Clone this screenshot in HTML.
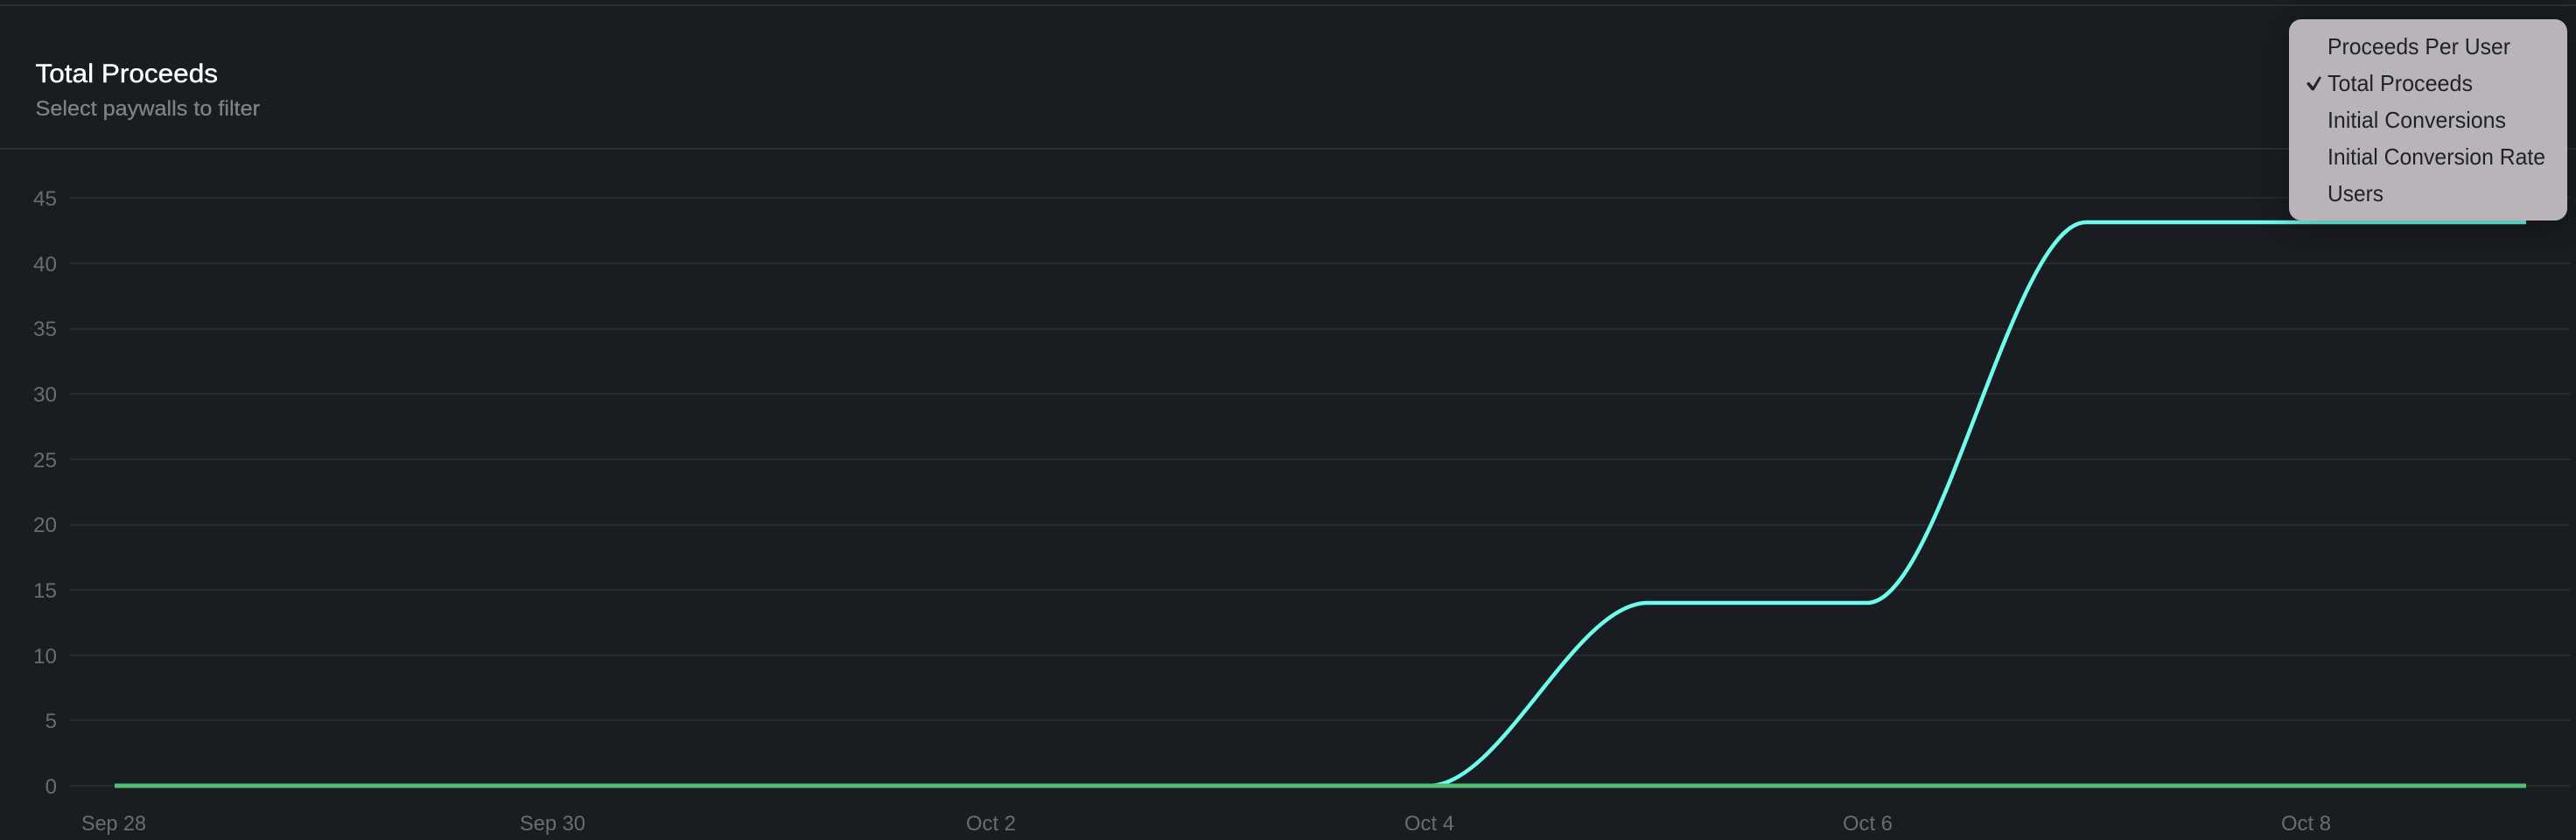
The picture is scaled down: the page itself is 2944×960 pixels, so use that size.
<!DOCTYPE html>
<html>
<head>
<meta charset="utf-8">
<style>
html,body{margin:0;padding:0;background:#191c20;width:2944px;height:960px;overflow:hidden}
svg{display:block;position:absolute;left:0;top:0}
text{font-family:"Liberation Sans",sans-serif}
.y{font-size:24px;fill:#696d6f;text-anchor:end}
.x{font-size:24px;fill:#696d6f}
.m{font-size:26px;fill:#1f2226}
#menu{position:absolute;left:2616px;top:22px;width:318px;height:230px;border-radius:14px;background:#b9b4b9;box-shadow:0 8px 32px rgba(0,0,0,.3)}
</style>
</head>
<body>
<svg width="2944" height="960" viewBox="0 0 2944 960" xmlns="http://www.w3.org/2000/svg">
<rect width="2944" height="960" fill="#191c20"/>
<rect x="0" y="5" width="2944" height="2" fill="#2a2d30"/>
<rect x="0" y="169" width="2944" height="2" fill="#2a2d30"/>
<text x="40.500" y="94" font-size="30" fill="#ffffff" stroke="#ffffff" stroke-width="0.400" textLength="208.500" lengthAdjust="spacingAndGlyphs">Total Proceeds</text>
<text x="40.500" y="132" font-size="24" fill="#808386" stroke="#808386" stroke-width="0.250" textLength="256.500" lengthAdjust="spacingAndGlyphs">Select paywalls to filter</text>
<g fill="#27292d">
<rect x="80" y="225" width="2858" height="2"/>
<rect x="80" y="300" width="2858" height="2"/>
<rect x="80" y="375" width="2858" height="2"/>
<rect x="80" y="449" width="2858" height="2"/>
<rect x="80" y="524" width="2858" height="2"/>
<rect x="80" y="599" width="2858" height="2"/>
<rect x="80" y="673" width="2858" height="2"/>
<rect x="80" y="748" width="2858" height="2"/>
<rect x="80" y="822" width="2858" height="2"/>
<rect x="80" y="897" width="2858" height="2"/>
</g>
<g class="labels">
<text class="y" x="65" y="235" textLength="27" lengthAdjust="spacingAndGlyphs">45</text>
<text class="y" x="65" y="310" textLength="27" lengthAdjust="spacingAndGlyphs">40</text>
<text class="y" x="65" y="384" textLength="27" lengthAdjust="spacingAndGlyphs">35</text>
<text class="y" x="65" y="459" textLength="27" lengthAdjust="spacingAndGlyphs">30</text>
<text class="y" x="65" y="534" textLength="27" lengthAdjust="spacingAndGlyphs">25</text>
<text class="y" x="65" y="608" textLength="27" lengthAdjust="spacingAndGlyphs">20</text>
<text class="y" x="65" y="683" textLength="27" lengthAdjust="spacingAndGlyphs">15</text>
<text class="y" x="65" y="758" textLength="27" lengthAdjust="spacingAndGlyphs">10</text>
<text class="y" x="65" y="832">5</text>
<text class="y" x="65" y="907">0</text>
<text class="x" x="93" y="949" textLength="74" lengthAdjust="spacingAndGlyphs">Sep 28</text>
<text class="x" x="594" y="949" textLength="75" lengthAdjust="spacingAndGlyphs">Sep 30</text>
<text class="x" x="1104" y="949" textLength="57" lengthAdjust="spacingAndGlyphs">Oct 2</text>
<text class="x" x="1605" y="949" textLength="57" lengthAdjust="spacingAndGlyphs">Oct 4</text>
<text class="x" x="2106" y="949" textLength="57" lengthAdjust="spacingAndGlyphs">Oct 6</text>
<text class="x" x="2607" y="949" textLength="57" lengthAdjust="spacingAndGlyphs">Oct 8</text>
</g>
<path d="M131 898H1633C1716.400 898 1799.600 689 1883 689H2134C2217.400 689 2300.600 254 2384 254H2887" fill="none" stroke="#6efcec" stroke-width="4.500"/>
<rect x="131" y="895.500" width="2756" height="5" fill="#4fbf74"/>
</svg>
<div id="menu"></div>
<svg width="2944" height="960" viewBox="0 0 2944 960" xmlns="http://www.w3.org/2000/svg">
<path d="M2636 95.500L2638.500 93.500L2643.500 99L2650.500 87.500L2653 88.500L2644.500 103.300L2642 103.300Z" fill="#1f2226"/>
<text class="m" x="2660" y="62" textLength="209" lengthAdjust="spacingAndGlyphs">Proceeds Per User</text>
<text class="m" x="2660" y="104" textLength="166" lengthAdjust="spacingAndGlyphs">Total Proceeds</text>
<text class="m" x="2660" y="146" textLength="204" lengthAdjust="spacingAndGlyphs">Initial Conversions</text>
<text class="m" x="2660" y="188" textLength="249" lengthAdjust="spacingAndGlyphs">Initial Conversion Rate</text>
<text class="m" x="2660" y="230" textLength="64" lengthAdjust="spacingAndGlyphs">Users</text>
</svg>
</body>
</html>
